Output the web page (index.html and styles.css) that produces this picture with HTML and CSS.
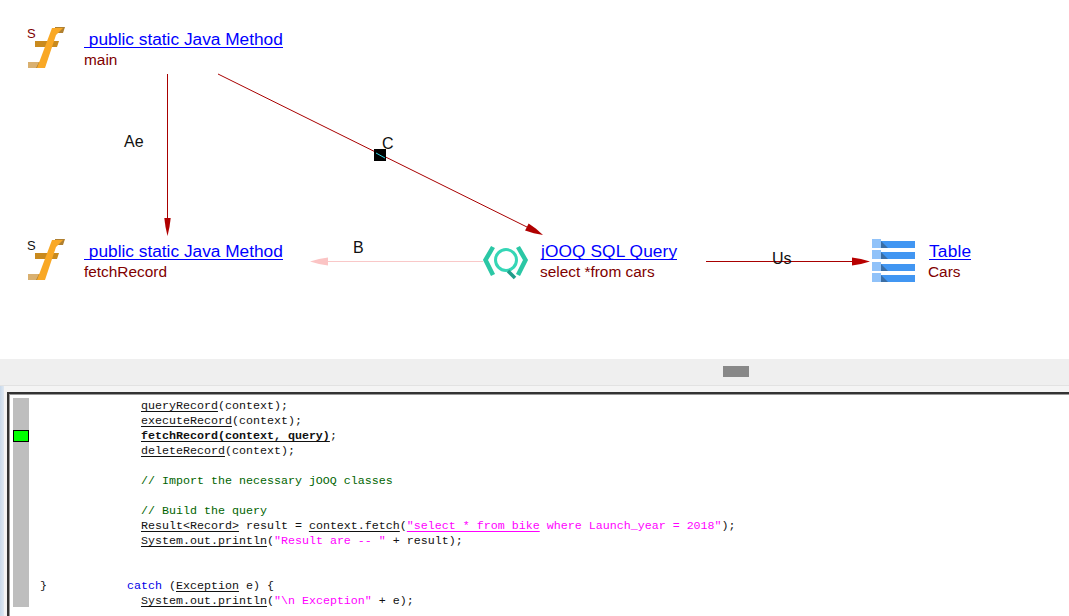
FILE: index.html
```html
<!DOCTYPE html>
<html lang="en">
<head>
  <meta charset="UTF-8">
  <meta name="viewport" content="width=device-width, initial-scale=1.0">
  <title>Call graph</title>
  <link rel="stylesheet" href="styles.css">
</head>

<body>
  <!-- Diagrama -->
  <section class="diagram">
    <svg class="edges" width="1069" height="359" viewBox="0 0 1069 359">
      <defs>
        <polygon id="arrow" points="-18,-4 -9,-2.5 0,0 -9,2.5 -18,4"/>
      </defs>
      <line x1="167.5" y1="74" x2="167.5" y2="225" stroke="#a80000"/>
      <use href="#arrow" transform="translate(167.5 236) rotate(90) scale(1 .8)" fill="#b00000"/>

      <line x1="218" y1="74" x2="535" y2="231" stroke="#a80000"/>
      <use href="#arrow" transform="translate(543 235) rotate(26.3)" fill="#b00000"/>
      <rect x="374" y="149" width="12" height="12" fill="#000"/>
      <line x1="376" y1="153" x2="385" y2="158" stroke="#33d6e6"/>

      <line x1="325" y1="261.5" x2="483" y2="261.5" stroke="#f9c8c8"/>
      <use href="#arrow" transform="translate(310 261.5) rotate(180)" fill="#fbc4c4"/>

      <line x1="706" y1="261.5" x2="860" y2="261.5" stroke="#a80000"/>
      <use href="#arrow" transform="translate(870 261.5)" fill="#b80000"/>
    </svg>

    <span class="edge-label label-ae">Ae</span>
    <span class="edge-label label-c">C</span>
    <span class="edge-label label-b">B</span>
    <span class="edge-label label-us">Us</span>

    <div class="node node-main">
      <span class="static-mark static-red">S</span>
      <svg class="node-icon" width="38" height="42" viewBox="0 0 38 42">
        <use href="#fn-icon"/>
      </svg>
      <div class="node-text">
        <a class="node-link" href="#">&nbsp;public static Java Method</a>
        <div class="node-name">main</div>
      </div>
    </div>

    <div class="node node-fetch">
      <span class="static-mark">S</span>
      <svg class="node-icon" width="38" height="42" viewBox="0 0 38 42">
        <g id="fn-icon">
          <path d="M27 0H37L35 6H27Z" fill="#b08030"/>
          <path d="M7 14H31L29 20H7Z" fill="#c98a1e"/>
          <path d="M0 35H13L11 41H0Z" fill="#d9b070"/>
          <path d="M8 41H15L18 35H11Z" fill="#b08030"/>
          <path d="M24 1H35L28 8L17 41H9Z" fill="#f9a825"/>
        </g>
      </svg>
      <div class="node-text">
        <a class="node-link" href="#">&nbsp;public static Java Method</a>
        <div class="node-name">fetchRecord</div>
      </div>
    </div>

    <div class="node node-query">
      <svg class="node-icon query-icon" width="46" height="36" viewBox="0 0 46 36">
        <path d="M10 3L2.500 16L10 31" fill="none" stroke="#2bc7a5" stroke-width="4.5"/>
        <path d="M35 3L42.500 16L35 31" fill="none" stroke="#2bc7a5" stroke-width="4.5"/>
        <circle cx="23" cy="16" r="10.500" fill="none" stroke="#35d6b6" stroke-width="3"/>
        <path d="M25 27L32 34" stroke="#1f9d8a" stroke-width="3.5"/>
      </svg>
      <div class="node-text">
        <a class="node-link" href="#">jOOQ SQL Query</a>
        <div class="node-name">select *from cars</div>
      </div>
    </div>

    <div class="node node-table">
      <svg class="node-icon" width="44" height="44" viewBox="0 0 44 44">
        <g id="tb-row">
          <rect x="9" y="2" width="34" height="7" fill="#4196f2"/>
          <rect x="0" y="0" width="9" height="9" fill="#90c2f9"/>
          <path d="M9 2L16 9H9Z" fill="#3b6ea5"/>
        </g>
        <use href="#tb-row" y="11"/>
        <use href="#tb-row" y="23"/>
        <use href="#tb-row" y="34"/>
      </svg>
      <div class="node-text">
        <a class="node-link" href="#">Table</a>
        <div class="node-name">Cars</div>
      </div>
    </div>
  </section>

  <!-- Barra do divisor -->
  <div class="splitter">
    <div class="splitter-knob"></div>
  </div>

  <!-- Painel de código -->
  <section class="code-shell">
    <div class="code-panel">
      <div class="gutter">
        <div class="marker"></div>
      </div>
      <div class="code">
        <div class="line in"><span class="ref">queryRecord</span>(context);</div>
        <div class="line in"><span class="ref">executeRecord</span>(context);</div>
        <div class="line in"><span class="ref hit">fetchRecord(context, query)</span>;</div>
        <div class="line in"><span class="ref">deleteRecord</span>(context);</div>
        <div class="line"></div>
        <div class="line in cm">// Import the necessary jOOQ classes</div>
        <div class="line"></div>
        <div class="line in cm">// Build the query</div>
        <div class="line in"><span class="ref">Result&lt;Record&gt;</span> result = <span class="ref">context.fetch</span>(<span class="str"><span class="ref">"select * from bike</span> where Launch_year = 2018"</span>);</div>
        <div class="line in"><span class="ref">System.out.println</span>(<span class="str">"Result are -- "</span> + result);</div>
        <div class="line"></div>
        <div class="line"></div>
        <div class="line">} <span class="catch"><span class="kw">catch</span> (<span class="ref">Exception</span> e) {</span></div>
        <div class="line in"><span class="ref">System.out.println</span>(<span class="str">"\n Exception"</span> + e);</div>
      </div>
    </div>
  </section>
</body>
</html>
```

FILE: styles.css
```css
html, body {
  height: 616px;
  overflow: hidden;
}

body {
  margin: 0;
  background-color: #fff;
  font-family: "Liberation Sans", Arial, sans-serif;
}

.diagram {
  position: relative;
  height: 359px;
}

.edges {
  position: absolute;
  top: 0;
  left: 0;
}

.edge-label {
  position: absolute;
  font-size: 16px;
  line-height: 18px;
  color: #111;
}

.label-ae { left: 124px; top: 133px; }
.label-c { left: 382px; top: 135px; }
.label-b { left: 353px; top: 239px; }
.label-us { left: 772px; top: 250px; }

.node {
  position: absolute;
  display: flex;
}

.node-main { left: 28px; top: 27px; }
.node-fetch { left: 28px; top: 239px; }
.node-query { left: 483px; top: 239px; }
.node-table { left: 872px; top: 239px; }

.static-mark {
  position: absolute;
  left: -1px;
  top: 0;
  font-size: 13px;
  line-height: 14px;
  color: #111;
}

.static-red {
  color: #800000;
}

.node-icon {
  flex: none;
}

.query-icon {
  margin-top: 5px;
}

.node-text {
  display: flex;
  flex-direction: column;
  align-items: flex-start;
}

.node-main .node-text,
.node-fetch .node-text {
  margin-left: 18px;
}

.node-query .node-text {
  margin-left: 11px;
}

.node-table .node-text {
  margin-left: 12px;
}

.node-query .node-link {
  margin-left: 1px;
  letter-spacing: .1px;
}

.node-table .node-link {
  margin-left: 1px;
  letter-spacing: .2px;
}

.node-link {
  height: 17px;
  margin-top: 3px;
  border-bottom: 1px solid #0000ff;
  color: #0000ff;
  font-size: 17.3px;
  line-height: 19px;
  white-space: nowrap;
  text-decoration: none;
}

.node-name {
  margin-top: 2px;
  color: #800000;
  font-size: 15.4px;
  line-height: 19px;
  white-space: nowrap;
}

.splitter {
  display: flex;
  align-items: flex-start;
  height: 26px;
  padding: 7px 0 0 723px;
  box-sizing: border-box;
  background-color: #efefef;
}

.splitter-knob {
  width: 26px;
  height: 11px;
  background-color: #888;
}

.code-shell {
  height: 231px;
  padding: 6px 0 0 7px;
  box-sizing: border-box;
  border-top: 1px solid #e2e2e2;
  background: linear-gradient(to right, #c9d9ea 0, #dfe8f2 4px, #f4f4f4 4px);
}

.code-panel {
  display: flex;
  height: 100%;
  padding: 4px 0 0 4px;
  box-sizing: border-box;
  border-top: 2px solid #333;
  border-left: 2px solid #333;
  box-shadow: inset 1px 1px 0 #999;
  background-color: #fff;
}

.gutter {
  flex: none;
  width: 16px;
  height: 209px;
  padding-top: 32px;
  box-sizing: border-box;
  background-color: #bebebe;
}

.marker {
  height: 12px;
  box-sizing: border-box;
  border: 1px solid #000;
  background-color: #00ff00;
}

.code {
  padding: 1px 0 0 11px;
  font-family: "Liberation Mono", "Courier New", monospace;
  font-size: 11.67px;
  line-height: 15px;
  color: #111;
}

.line {
  height: 15px;
  white-space: pre;
}

.in {
  padding-left: 101px;
}

.catch {
  padding-left: 73px;
}

.ref {
  text-decoration: underline;
  text-decoration-thickness: 1px;
  text-underline-offset: 2px;
}

.hit {
  font-weight: bold;
}

.cm {
  color: #006400;
}

.str {
  color: #ff00ff;
}

.kw {
  color: #0000e6;
}
```
